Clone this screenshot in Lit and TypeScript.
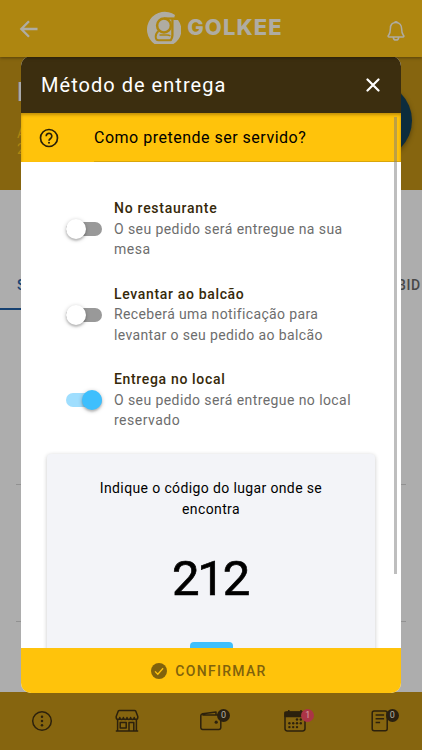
import { LitElement, html, css, svg, nothing } from "lit";

interface Option {
  title: string;
  lines: string[];
  cls: string;
  on: boolean;
}

const OPTIONS: Option[] = [
  { title: "No restaurante", lines: ["O seu pedido será entregue na sua", "mesa"], cls: "restaurant", on: false },
  { title: "Levantar ao balcão", lines: ["Receberá uma notificação para", "levantar o seu pedido ao balcão"], cls: "counter", on: false },
  { title: "Entrega no local", lines: ["O seu pedido será entregue no local", "reservado"], cls: "local", on: true },
];

const dots = (pts: number[][], r: number) => pts.map(([x, y]) => svg`<circle cx=${x} cy=${y} r=${r} fill="currentColor" stroke="none"/>`);

const NAV = [
  { badge: "", icon: svg`<circle cx="12" cy="12" r="9.3"/>${dots([[12, 7.8], [12, 12], [12, 16.2]], 1.25)}` },
  {
    badge: "",
    icon: svg`<path d="M3.2 2.2Q3.6 1.4 4.6 1.4H19.4Q20.4 1.4 20.8 2.2L22.8 7.4V8.6a1.8 1.8 0 0 1-3.6 0a1.8 1.8 0 0 1-3.6 0a1.8 1.8 0 0 1-3.6 0a1.8 1.8 0 0 1-3.6 0a1.8 1.8 0 0 1-3.6 0a1.8 1.8 0 0 1-3.6 0V7.4zM2.6 11V21.5M21.4 11V21.5M.8 22H23.2M5.2 13.6h6v5.4h-6zM14 22v-8.6h4.8V22"/>`,
  },
  {
    badge: "0",
    icon: svg`<path d="M3.4 6H20a1.8 1.8 0 0 1 1.8 1.8V18.6a1.8 1.8 0 0 1-1.8 1.8H3.6a1.8 1.8 0 0 1-1.8-1.8V6.8Q1.8 5.2 3.6 4.7L17 3V6"/>${dots([[17.2, 13.2]], 1.6)}`,
  },
  {
    badge: "1",
    icon: svg`<rect x="2" y="3" width="20" height="19" rx="2.4"/><path d="M2 3.2H22V7.6H2z" fill="currentColor"/><path d="M5.8 1V4M18 1V4"/>${dots([[14, 10.5], [17.8, 10.5], [6.4, 14.3], [10.2, 14.3], [14, 14.3], [17.8, 14.3], [6.4, 18.1], [10.2, 18.1], [14, 18.1]], 1.2)}`,
  },
  {
    badge: "0",
    icon: svg`<rect x="4.2" y="2" width="15" height="19.8" rx="2"/><path d="M7.6 5.9h8.5M7.6 9.7h8.5M7.6 13.5h4.5"/>`,
  },
];

class GkSwitch extends LitElement {
  static properties = { on: { type: Boolean, reflect: true } };
  declare on: boolean;
  static styles = css`
    :host { display: block; width: 36px; height: 14px; }
    .track { height: 14px; border-radius: 7px; background: #999; display: flex; align-items: center; }
    .thumb { flex: none; width: 20px; height: 20px; border-radius: 50%; background: #fff;
      box-shadow: 0 2px 2px rgba(0,0,0,.14), 0 1px 4px rgba(0,0,0,.26); }
    :host([on]) .track { background: #9fdefe; justify-content: flex-end; }
    :host([on]) .thumb { background: #3ebffd; }
  `;
  render() {
    return html`<div class="track"><div class="thumb"></div></div>`;
  }
}
customElements.define("gk-switch", GkSwitch);

class AppRoot extends LitElement {
  static styles = css`
    :host { display: block; position: relative; width: 422px; height: 750px; overflow: hidden;
      font-family: Roboto, "Noto Sans", sans-serif; font-size: 14px; color: #000; }
    * { box-sizing: border-box; }
    svg { display: block; fill: none; stroke: currentColor; }
    .page { display: flex; flex-direction: column; height: 100%; background: #adadad; }
    .bar { flex: none; height: 57px; background: #ae8610; color: #afaca3; display: grid;
      grid-template-columns: 1fr auto 1fr; align-items: center; padding: 0 16px 2px 17px; box-shadow: 0 1px 3px rgba(0,0,0,.35); z-index: 1; }
    .back { margin-top: 3px; }
    .bell { justify-self: end; margin-top: 6px; }
    .brand { display: flex; align-items: center; gap: 6px; padding-left: 7px; }
    .word { font: 800 22px/26px Inter, sans-serif; letter-spacing: 1.1px; white-space: nowrap; margin-top: -1px; }
    .hero { flex: none; height: 133px; background: #86650f; display: grid; grid-template-columns: 1fr 87px; align-items: start; overflow: hidden; }
    .name { color: #aaa; font: 500 25px/28px Roboto, sans-serif; padding: 22px 0 0 17px; }
    .meta { color: #ae8610; font-size: 14px; line-height: 16px; padding-top: 18px; font-weight: 400; }
    .avatar { width: 77px; height: 77px; margin-top: 25px; border-radius: 50%; background: #0c2c3d; box-shadow: 0 2px 5px rgba(0,0,0,.35); }
    .tabs { flex: none; margin-top: 72px; height: 48px; display: flex; justify-content: space-between;
      font-weight: 500; font-size: 14px; line-height: 46px; letter-spacing: .8px; }
    .tab { width: 140px; padding-left: 17px; color: #164171; border-bottom: 2px solid #164171; }
    .tab.next { width: 25px; padding: 0; color: #484848; border: 0; white-space: nowrap; letter-spacing: .6px; }
    .rows { flex: 1; min-height: 0; overflow: hidden; padding: 174px 16px 0; }
    .rule { height: 1px; background: #919191; margin-bottom: 136px; }
    .rule:last-child { margin-bottom: 0; }
    .nav { flex: none; height: 58px; background: #86650f; color: #2c210d; display: grid; grid-template-columns: repeat(5, 1fr);
      align-items: center; justify-items: center; }
    .item { position: relative; }
    .badge { position: absolute; left: 18px; top: 0; width: 13px; height: 13px; border-radius: 50%; background: #2a2010;
      color: #b5b0a4; font-size: 9px; line-height: 13px; text-align: center; }
    .badge.alert { background: #ab3446; color: #d2a5a4; }

    .modal { position: absolute; left: 21px; top: 56px; width: 380px; height: 637px; border-radius: 10px; overflow: hidden;
      background: #fff; display: flex; flex-direction: column; }
    .head { flex: none; height: 57px; background: #3c2e0f; color: #fff; display: flex; align-items: center;
      justify-content: space-between; padding: 0 21px 0 20px; font-size: 20px; letter-spacing: 1.03px; }
    .body { flex: 1; min-height: 0; overflow: hidden; position: relative; }
    .ask { height: 49px; background: #ffc30b; display: flex; box-shadow: inset 0 2px 3px rgba(80,50,0,.35); }
    .help { flex: none; width: 73px; padding: 15px 0 0 18px; color: #2a2008; }
    .question { flex: 1; font-size: 16px; line-height: 46px; letter-spacing: .5px; height: 49px; padding-top: 2px; border-bottom: 1px solid #d9a60a; }
    .options { padding: 36px 0 0 45px; display: flex; flex-direction: column; gap: 24px; }
    .option { display: grid; grid-template-columns: 48px 1fr; align-items: start; }
    .option gk-switch { margin-top: 24px; }
    .text { line-height: 20.5px; white-space: nowrap; }
    .title { font-weight: 500; color: #36290a; letter-spacing: .74px; }
    .counter .title, .local .title { letter-spacing: .66px; }
    .line { color: #6d6d6d; letter-spacing: .42px; }
    .counter .line { letter-spacing: .37px; }
    .line.short { letter-spacing: .5px; }
    .card { margin: 23px 26px 0; height: 260px; border-radius: 4px; background: #f3f4f8; box-shadow: 0 1px 4px rgba(0,0,0,.22);
      padding-top: 24px; display: flex; flex-direction: column; align-items: center; line-height: 21.5px; letter-spacing: .37px; }
    .code { font-size: 49px; line-height: 60px; letter-spacing: -2.2px; margin-top: 28px; padding-right: 2px; -webkit-text-stroke: .7px #000; }
    .go { width: 43px; height: 40px; border-radius: 4px; background: #3ebffd; margin-top: 33px; flex: none; }
    .scroll { position: absolute; right: 4px; top: 4px; width: 3px; height: 457px; background: rgba(125,125,125,.5); }
    .foot { flex: none; height: 45px; background: #ffc30b; color: #80620c; display: flex; align-items: center; justify-content: center;
      gap: 8px; font-weight: 500; letter-spacing: 1.3px; padding-right: 4px; }
  `;

  render() {
    return html`
      <div class="page">
        <header class="bar">
          <svg class="back" width="24" height="24" viewBox="0 0 24 24" stroke-width="2.3"><path d="M20.5 12H4.500M12 4.300L4.300 12l7.700 7.700"/></svg>
          <div class="brand">
            <svg width="34" height="34" viewBox="0 0 34 34">
              <path d="M7.500 33A16.300 16.300 0 0 1 28 4L26.500 9L31 9A16.300 16.300 0 0 1 26.500 33Z" fill="currentColor" stroke="none"/>
              <circle cx="17" cy="14.500" r="6.900" stroke="#ae8610" stroke-width="2.500"/>
              <path d="M17 7.500H27.500" stroke="#ae8610" stroke-width="2.200"/>
              <path d="M25.400 7.500V24.500Q25.400 27 23.500 29.500" stroke="#ae8610" stroke-width="2.300"/>
              <path d="M11.500 20C7.500 23.500 8 29.300 11.500 29.300H24" stroke="#ae8610" stroke-width="1.900"/>
              <path d="M12.500 24H20Q22 24 23.500 25" stroke="#ae8610" stroke-width="1.500"/>
            </svg>
            <span class="word">GOLKEE</span>
          </div>
          <svg class="bell" width="20" height="22" viewBox="0 0 20 22" stroke-width="1.5" stroke-linejoin="round">
            <path d="M10 2.600C6.200 2.600 4.400 5.300 4.400 8.600C4.400 13.500 3.500 14 2.200 15.800Q1.800 17 3 17H17Q18.200 17 17.800 15.800C16.500 14 15.600 13.500 15.600 8.600C15.600 5.300 13.800 2.600 10 2.600M8.500 2.500Q10 .8 11.500 2.500M7.300 17.200a2.700 2.900 0 0 0 5.400 0"/>
          </svg>
        </header>
        <section class="hero">
          <div class="name">L<div class="meta">A<br />2</div></div>
          <div class="avatar"></div>
        </section>
        <div class="tabs"><div class="tab">S</div><div class="tab next">BID</div></div>
        <div class="rows"><div class="rule"></div><div class="rule"></div></div>
        <nav class="nav">
          ${NAV.map(
            (n) => html`<div class="item">
              <svg width="24" height="24" viewBox="0 0 24 24" stroke-width="1.5" stroke-linejoin="round">${n.icon}</svg>
              ${n.badge ? html`<span class="badge ${n.badge === "1" ? "alert" : ""}">${n.badge}</span>` : nothing}
            </div>`,
          )}
        </nav>
      </div>

      <div class="modal">
        <div class="head">
          <span>Método de entrega</span>
          <svg width="14" height="14" viewBox="0 0 14 14" stroke-width="2.2" stroke-linecap="round"><path d="M1.500 1.500l11 11M12.500 1.500l-11 11"/></svg>
        </div>
        <div class="body">
          <div class="ask">
            <div class="help">
              <svg width="20" height="20" viewBox="0 0 20 20" stroke-width="1.7"><circle cx="10" cy="10" r="8.500"/><path d="M7.200 8.200a2.800 2.800 0 1 1 4.700 2Q10 11.500 10 12.700"/><circle cx="10" cy="14.800" r="1" fill="currentColor" stroke="none"/></svg>
            </div>
            <div class="question">Como pretende ser servido?</div>
          </div>
          <div class="options">
            ${OPTIONS.map(
              (o) => html`<div class="option ${o.cls}">
                <gk-switch ?on=${o.on}></gk-switch>
                <div class="text">
                  <div class="title">${o.title}</div>
                  ${o.lines.map((l) => html`<div class="line ${l.length < 10 ? "short" : ""}">${l}</div>`)}
                </div>
              </div>`,
            )}
          </div>
          <div class="card">
            <div>Indique o código do lugar onde se</div>
            <div>encontra</div>
            <div class="code">212</div>
            <div class="go"></div>
          </div>
          <div class="scroll"></div>
        </div>
        <div class="foot">
          <svg width="16" height="16" viewBox="0 0 16 16"><circle cx="8" cy="8" r="8" fill="currentColor" stroke="none"/><path d="M4 8.400l2.800 2.800 5.300-6" stroke="#ffc30b" stroke-width="1.3"/></svg>
          <span>CONFIRMAR</span>
        </div>
      </div>
    `;
  }
}
customElements.define("app-root", AppRoot);
